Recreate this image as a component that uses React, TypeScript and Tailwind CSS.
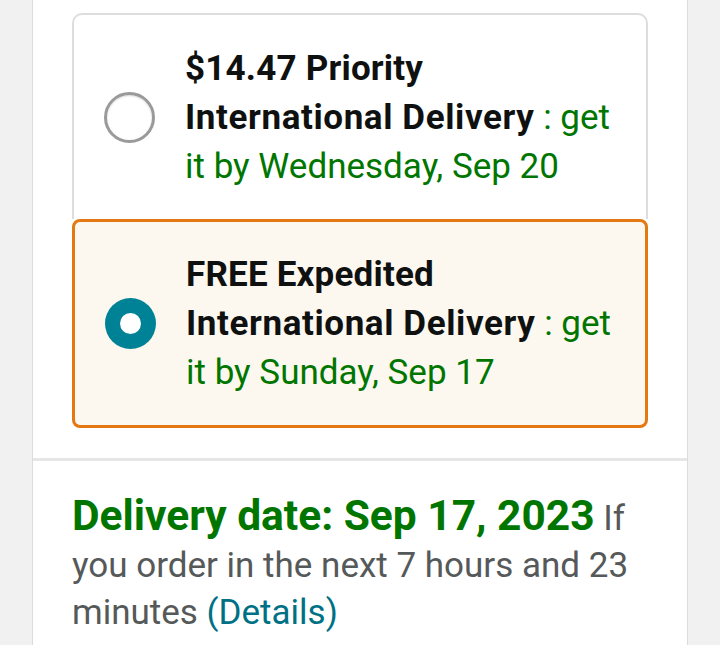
import { ReactNode } from "react";

interface OptionProps {
    selected: boolean;
    firstLine: string;
    secondLine: string;
    lastLine: string;
}

function ShippingOption({ selected, firstLine, secondLine, lastLine }: OptionProps) {
    return (
        <div
            className={
                selected
                    ? "flex items-center h-[209px] pl-[30px] pr-[10px] rounded-[8px] border-[3px] border-[#e47911] bg-[#fdf8ef]"
                    : "flex items-center h-[206px] pl-[30px] pr-[10px] rounded-t-[10px] border-2 border-b-0 border-[#dddddd] bg-white"
            }
        >
            {selected ? (
                <div className="shrink-0 w-[51px] h-[51px] rounded-full bg-[#008296] flex items-center justify-center">
                    <div className="w-[21px] h-[21px] rounded-full bg-white" />
                </div>
            ) : (
                <div className="shrink-0 w-[51px] h-[51px] rounded-full border-[3px] border-[#9a9a9a] bg-white shadow-[inset_0_1px_2px_rgba(0,0,0,0.15)]" />
            )}
            <div className="ml-[30px] text-[35px] leading-[49px] text-[#0f1111] whitespace-nowrap">
                <div className="font-bold tracking-[0.2px]">{firstLine}</div>
                <div>
                    <span className="font-bold tracking-[0.6px]">{secondLine}</span>
                    <span className="text-[#007600]"> : get</span>
                </div>
                <div className="text-[#007600]">{lastLine}</div>
            </div>
        </div>
    );
}

function Line({ children }: { children: ReactNode }) {
    return <div className="whitespace-nowrap">{children}</div>;
}

export default function App() {
    return (
        <div
            className="w-[720px] h-[645px] overflow-hidden bg-[#f1f1f1]"
            style={{ fontFamily: "Roboto, 'Noto Sans', sans-serif" }}
        >
            <div className="mx-[32px] h-full bg-white border-x border-[#dcdcdc]">
                <div className="px-[39px] pt-[13px] pb-[30px] border-b-[3px] border-[#e6e6e6]">
                    <ShippingOption
                        selected={false}
                        firstLine="$14.47 Priority"
                        secondLine="International Delivery"
                        lastLine="it by Wednesday, Sep 20"
                    />
                    <ShippingOption
                        selected={true}
                        firstLine="FREE Expedited"
                        secondLine="International Delivery"
                        lastLine="it by Sunday, Sep 17"
                    />
                </div>
                <div className="px-[39px] pt-[31px] text-[35px] leading-[47px] text-[#565959]">
                    <Line>
                        <span className="font-bold text-[#007600] text-[42.5px]">Delivery date: Sep 17, 2023</span> If
                    </Line>
                    <Line>you order in the next 7 hours and 23</Line>
                    <Line>
                        minutes <span className="text-[#007185]">(Details)</span>
                    </Line>
                </div>
            </div>
        </div>
    );
}
